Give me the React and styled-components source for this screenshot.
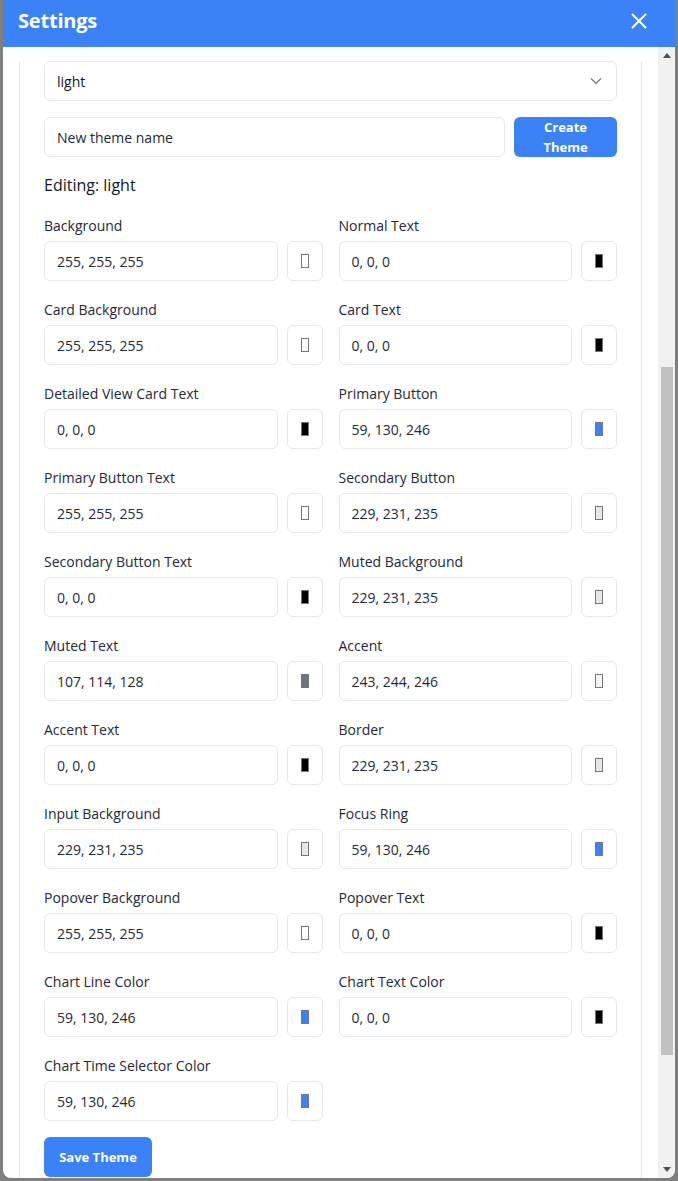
import React from "react";
import styled, { createGlobalStyle } from "styled-components";

const Global = createGlobalStyle`
  html, body { margin: 0; padding: 0; }
  body {
    background: #7f7f7f;
    font-family: "Open Sans", "Noto Sans", sans-serif;
    overflow: hidden;
  }
  * { box-sizing: border-box; }
`;

const Page = styled.div`
  width: 678px;
  height: 1181px;
  padding: 0 3px 3px 3px;
  display: flex;
`;

const Modal = styled.div`
  width: 672px;
  height: 1178px;
  background: #fff;
  border-radius: 0 0 8px 8px;
  display: flex;
  flex-direction: column;
  overflow: hidden;
`;

const Header = styled.div`
  height: 47px;
  flex: none;
  background: #3b82f6;
  display: flex;
  align-items: center;
  justify-content: space-between;
  padding: 0 28px 6px 15px;
`;

const Title = styled.h2`
  margin: 0;
  color: #fff;
  font-size: 20px;
  font-weight: 700;
  letter-spacing: -0.2px;
`;

const CloseBtn = styled.button`
  border: none;
  background: none;
  padding: 0;
  display: flex;
  color: #fff;
  cursor: pointer;
`;

const Body = styled.div`
  flex: 1;
  display: flex;
  min-height: 0;
`;

const ScrollArea = styled.div`
  flex: 1;
  overflow: hidden;
  padding: 14px 16px 0 16px;
`;

const Panel = styled.div`
  border: 1px solid #e5e7eb;
  border-top: none;
  padding: 0 24px 24px 24px;
  display: flex;
  flex-direction: column;
`;

const SelectBox = styled.div`
  height: 40px;
  border: 1px solid #e5e7eb;
  border-radius: 6px;
  display: flex;
  align-items: center;
  justify-content: space-between;
  padding: 0 14px 0 12px;
  font-size: 14px;
  color: #111827;
  margin-bottom: 16px;
`;

const CreateRow = styled.div`
  display: flex;
  gap: 9px;
  margin-bottom: 16px;
`;

const TextInput = styled.div`
  flex: 1;
  height: 40px;
  border: 1px solid #e5e7eb;
  border-radius: 6px;
  display: flex;
  align-items: center;
  padding: 0 12px;
  font-size: 14px;
  color: #1f2937;
  background: #fff;
  min-width: 0;
`;

const PrimaryButton = styled.button`
  border: none;
  background: #3b82f6;
  color: #fff;
  font-family: inherit;
  font-weight: 700;
  font-size: 13px;
  line-height: 20px;
  border-radius: 6px;
  height: 40px;
  width: ${(p) => p.$w}px;
  flex: none;
  padding: 0 14px;
  text-align: center;
  cursor: pointer;
`;

const Heading = styled.h3`
  margin: 0 0 19px 0;
  font-size: 16px;
  line-height: 24px;
  font-weight: 500;
  color: #111827;
`;

const Grid = styled.div`
  display: grid;
  grid-template-columns: 1fr 1fr;
  column-gap: 16px;
  row-gap: 19px;
  margin-bottom: 16px;
`;

const Field = styled.div`
  display: flex;
  flex-direction: column;
  gap: 4px;
`;

const Label = styled.label`
  font-size: 14px;
  line-height: 20px;
  padding-bottom: 1px;
  color: #1f2937;
`;

const InputRow = styled.div`
  display: flex;
  gap: 9px;
`;

const SwatchButton = styled.div`
  width: 36px;
  height: 40px;
  flex: none;
  border: 1px solid #e5e7eb;
  border-radius: 6px;
  display: flex;
  align-items: center;
  justify-content: center;
`;

const Swatch = styled.div`
  width: 8px;
  height: 14px;
  border: 1px solid #767676;
  background: ${(p) => p.$c};
`;

const Scrollbar = styled.div`
  width: 17px;
  flex: none;
  background: #f1f1f1;
  display: flex;
  flex-direction: column;
  align-items: center;
`;

const Arrow = styled.div`
  height: 17px;
  width: 17px;
  flex: none;
  display: flex;
  align-items: center;
  justify-content: center;
`;

const Track = styled.div`
  flex: 1;
  width: 100%;
  display: flex;
  flex-direction: column;
  align-items: center;
`;

const Thumb = styled.div`
  width: 12px;
  height: ${(p) => p.$h}px;
  margin-top: ${(p) => p.$top}px;
  background: #c1c1c1;
`;

const SaveRow = styled.div`
  display: flex;
`;

const fields = [
  ["Background", "255, 255, 255"],
  ["Normal Text", "0, 0, 0"],
  ["Card Background", "255, 255, 255"],
  ["Card Text", "0, 0, 0"],
  ["Detailed View Card Text", "0, 0, 0"],
  ["Primary Button", "59, 130, 246"],
  ["Primary Button Text", "255, 255, 255"],
  ["Secondary Button", "229, 231, 235"],
  ["Secondary Button Text", "0, 0, 0"],
  ["Muted Background", "229, 231, 235"],
  ["Muted Text", "107, 114, 128"],
  ["Accent", "243, 244, 246"],
  ["Accent Text", "0, 0, 0"],
  ["Border", "229, 231, 235"],
  ["Input Background", "229, 231, 235"],
  ["Focus Ring", "59, 130, 246"],
  ["Popover Background", "255, 255, 255"],
  ["Popover Text", "0, 0, 0"],
  ["Chart Line Color", "59, 130, 246"],
  ["Chart Text Color", "0, 0, 0"],
  ["Chart Time Selector Color", "59, 130, 246"],
];

export default function App() {
  return (
    <>
      <Global />
      <Page>
        <Modal>
          <Header>
            <Title>Settings</Title>
            <CloseBtn aria-label="Close">
              <svg width="16" height="16" viewBox="0 0 16 16" fill="none" stroke="currentColor" strokeWidth="2" strokeLinecap="round">
                <path d="M1.5 1.5L14.5 14.5M14.5 1.5L1.5 14.5" />
              </svg>
            </CloseBtn>
          </Header>
          <Body>
            <ScrollArea>
              <Panel>
                <SelectBox>
                  <span>light</span>
                  <svg width="12" height="8" viewBox="0 0 12 8" fill="none" stroke="#6b7280" strokeWidth="1.2">
                    <path d="M1 1.5L6 6.5L11 1.5" />
                  </svg>
                </SelectBox>
                <CreateRow>
                  <TextInput>New theme name</TextInput>
                  <PrimaryButton $w={103}>Create Theme</PrimaryButton>
                </CreateRow>
                <Heading>Editing: light</Heading>
                <Grid>
                  {fields.map(([label, value]) => (
                    <Field key={label}>
                      <Label>{label}</Label>
                      <InputRow>
                        <TextInput>{value}</TextInput>
                        <SwatchButton>
                          <Swatch $c={`rgb(${value})`} />
                        </SwatchButton>
                      </InputRow>
                    </Field>
                  ))}
                </Grid>
                <SaveRow>
                  <PrimaryButton $w={108}>Save Theme</PrimaryButton>
                </SaveRow>
              </Panel>
            </ScrollArea>
            <Scrollbar>
              <Arrow>
                <svg width="8" height="5" viewBox="0 0 8 5"><path d="M0 5L4 0L8 5Z" fill="#505050" /></svg>
              </Arrow>
              <Track>
                <Thumb $top={303} $h={688} />
              </Track>
              <Arrow>
                <svg width="8" height="5" viewBox="0 0 8 5"><path d="M0 0L4 5L8 0Z" fill="#505050" /></svg>
              </Arrow>
            </Scrollbar>
          </Body>
        </Modal>
      </Page>
    </>
  );
}
